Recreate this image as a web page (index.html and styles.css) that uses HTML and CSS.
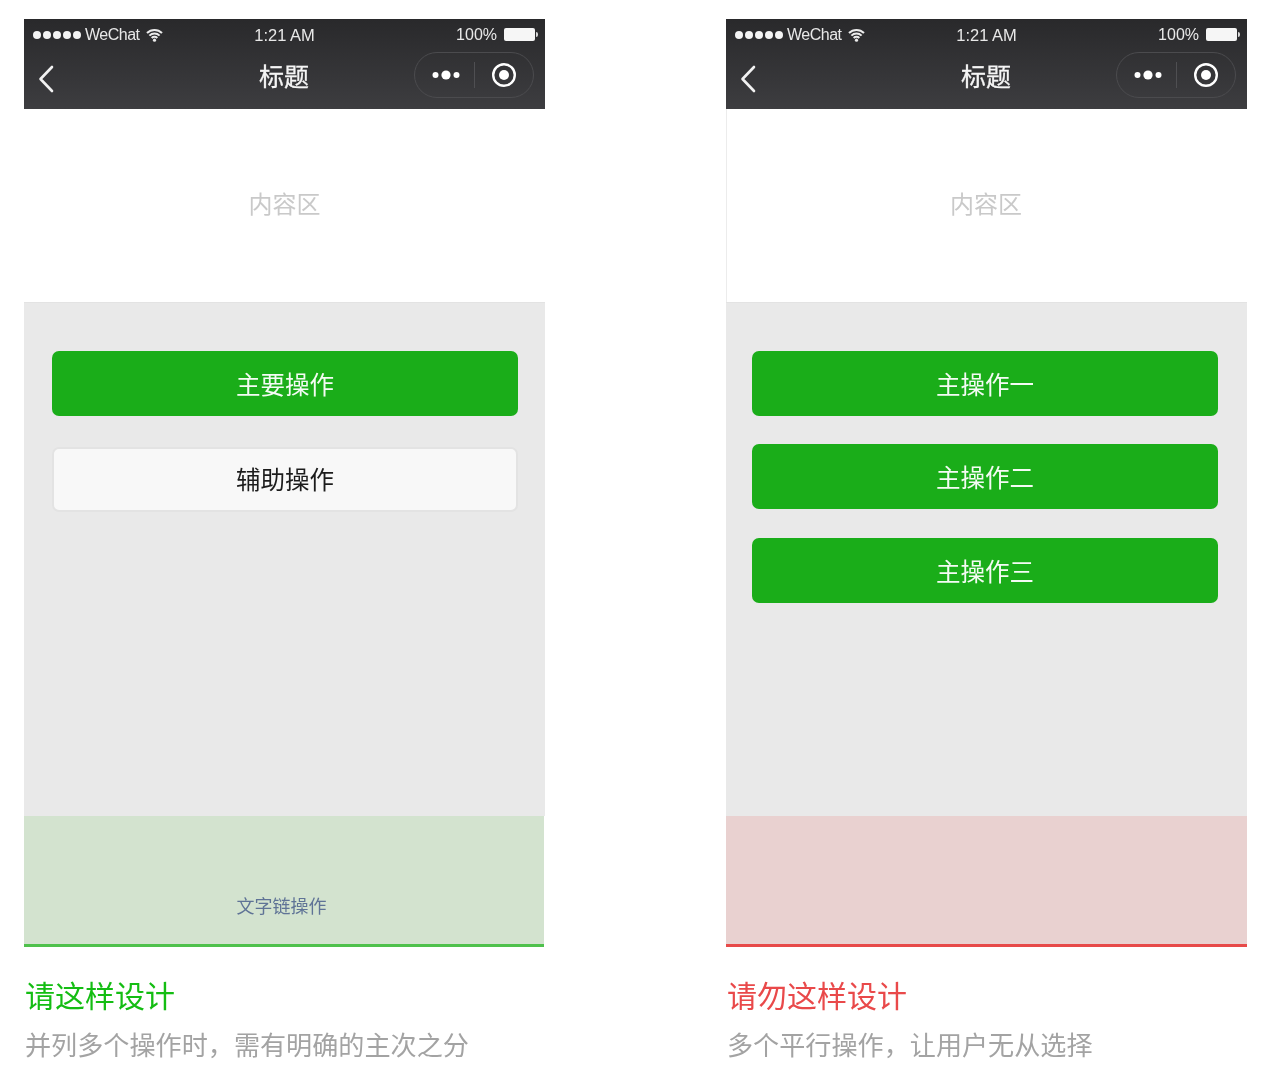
FILE: index.html
```html
<!DOCTYPE html>
<html lang="zh-CN">
<head>
    <meta charset="UTF-8">
    <meta name="viewport" content="width=device-width, initial-scale=1.0">
    <title>主次操作</title>
    <link rel="stylesheet" href="styles.css">
</head>
<body>
    <main class="compare">
        <!-- do -->
        <section class="sample sample-do">
            <header class="phone-head">
                <div class="status-bar">
                    <div class="status-left">
                        <span class="signal"><i></i><i></i><i></i><i></i><i></i></span>
                        <span class="carrier">WeChat</span>
                        <svg class="wifi" width="17" height="14" viewBox="0 0 17 14"><path d="M1 5a10.6 10.6 0 0 1 15 0M3.4 7.6a7.2 7.2 0 0 1 10.2 0M5.7 10a3.9 3.9 0 0 1 5.6 0" fill="none" stroke="#ececec" stroke-width="2"/><circle cx="8.5" cy="12.2" r="1.6" fill="#ececec"/></svg>
                    </div>
                    <div class="status-time">1:21 AM</div>
                    <div class="status-right">
                        <span class="percent">100%</span>
                        <span class="battery"></span>
                    </div>
                </div>
                <div class="nav-bar">
                    <svg class="back" width="16" height="28" viewBox="0 0 16 28"><path d="M14 2 2.5 14 14 26" fill="none" stroke="#f2f2f2" stroke-width="2.6" stroke-linecap="round" stroke-linejoin="round"/></svg>
                    <div class="nav-title">标题</div>
                    <div class="capsule">
                        <svg class="more" width="28" height="10" viewBox="0 0 28 10"><circle cx="3.5" cy="5" r="3" fill="#fff"/><circle cx="14" cy="5" r="4.6" fill="#fff"/><circle cx="24.5" cy="5" r="3" fill="#fff"/></svg>
                        <span class="capsule-line"></span>
                        <svg class="target" width="26" height="26" viewBox="0 0 26 26"><circle cx="13" cy="13" r="10.8" fill="none" stroke="#fff" stroke-width="2.4"/><circle cx="13" cy="13" r="5" fill="#fff"/></svg>
                    </div>
                </div>
            </header>
            <div class="content-area">内容区</div>
            <div class="actions actions-do">
                <div class="btn btn-primary">主要操作</div>
                <div class="btn btn-default">辅助操作</div>
            </div>
            <div class="foot-zone foot-good"><a class="text-link">文字链操作</a></div>
            <h2 class="verdict verdict-good">请这样设计</h2>
            <p class="note">并列多个操作时，需有明确的主次之分</p>
        </section>

        <!-- don't -->
        <section class="sample sample-dont">
            <header class="phone-head">
                <div class="status-bar">
                    <div class="status-left">
                        <span class="signal"><i></i><i></i><i></i><i></i><i></i></span>
                        <span class="carrier">WeChat</span>
                        <svg class="wifi" width="17" height="14" viewBox="0 0 17 14"><path d="M1 5a10.6 10.6 0 0 1 15 0M3.4 7.6a7.2 7.2 0 0 1 10.2 0M5.7 10a3.9 3.9 0 0 1 5.6 0" fill="none" stroke="#ececec" stroke-width="2"/><circle cx="8.5" cy="12.2" r="1.6" fill="#ececec"/></svg>
                    </div>
                    <div class="status-time">1:21 AM</div>
                    <div class="status-right">
                        <span class="percent">100%</span>
                        <span class="battery"></span>
                    </div>
                </div>
                <div class="nav-bar">
                    <svg class="back" width="16" height="28" viewBox="0 0 16 28"><path d="M14 2 2.5 14 14 26" fill="none" stroke="#f2f2f2" stroke-width="2.6" stroke-linecap="round" stroke-linejoin="round"/></svg>
                    <div class="nav-title">标题</div>
                    <div class="capsule">
                        <svg class="more" width="28" height="10" viewBox="0 0 28 10"><circle cx="3.5" cy="5" r="3" fill="#fff"/><circle cx="14" cy="5" r="4.6" fill="#fff"/><circle cx="24.5" cy="5" r="3" fill="#fff"/></svg>
                        <span class="capsule-line"></span>
                        <svg class="target" width="26" height="26" viewBox="0 0 26 26"><circle cx="13" cy="13" r="10.8" fill="none" stroke="#fff" stroke-width="2.4"/><circle cx="13" cy="13" r="5" fill="#fff"/></svg>
                    </div>
                </div>
            </header>
            <div class="content-area">内容区</div>
            <div class="actions actions-dont">
                <div class="btn btn-primary">主操作一</div>
                <div class="btn btn-primary">主操作二</div>
                <div class="btn btn-primary">主操作三</div>
            </div>
            <div class="foot-zone foot-bad"></div>
            <h2 class="verdict verdict-bad">请勿这样设计</h2>
            <p class="note">多个平行操作，让用户无从选择</p>
        </section>
    </main>
</body>
</html>
```

FILE: styles.css
```css
* {
    margin: 0;
    padding: 0;
    box-sizing: border-box;
}

body {
    font-family: "Noto Sans CJK SC", "Liberation Sans", sans-serif;
    background: #ffffff;
}

.compare {
    display: flex;
    gap: 181px;
    padding: 19px 0 0 24px;
}

.sample {
    width: 521px;
}

/* phone header */
.phone-head {
    height: 90px;
    background: linear-gradient(180deg, #29292b 0%, #3d3d40 100%);
    color: #e8e8e8;
    filter: blur(0.4px);
}

.status-bar {
    height: 31px;
    display: grid;
    grid-template-columns: 1fr auto 1fr;
    align-items: center;
    padding: 0 7px 0 9px;
    font-family: "Liberation Sans", sans-serif;
    font-size: 16px;
}

.status-left {
    display: flex;
    align-items: center;
}

.signal {
    display: flex;
    gap: 2px;
    margin-right: 4px;
}

.signal i {
    width: 8px;
    height: 8px;
    border-radius: 50%;
    background: #f4f4f4;
}

.carrier {
    letter-spacing: -0.5px;
    margin-right: 6px;
}

.status-time {
    font-size: 16.5px;
    padding-top: 2px;
    margin-left: -2px;
}

.status-right {
    display: flex;
    align-items: center;
    justify-content: flex-end;
}

.percent {
    margin-right: 7px;
}

.battery {
    width: 31px;
    height: 13px;
    margin-right: 3px;
    background: #f6f6f6;
    border-radius: 2px;
    position: relative;
}

.battery::after {
    content: '';
    position: absolute;
    right: -3px;
    top: 4px;
    width: 2px;
    height: 5px;
    background: #d8d8d8;
    border-radius: 0 2px 2px 0;
}

.nav-bar {
    height: 59px;
    display: grid;
    grid-template-columns: 1fr auto 1fr;
    align-items: center;
    padding: 0 11px 0 14px;
}

.back {
    margin-top: -2px;
}

.nav-title {
    font-size: 25px;
    font-weight: 400;
    color: #f5f5f5;
    line-height: 1;
    margin: -9px 4px 0 0;
    -webkit-text-stroke: 0.3px #f5f5f5;
}

.capsule {
    justify-self: end;
    width: 120px;
    height: 46px;
    margin-top: -9px;
    display: flex;
    align-items: center;
    border: 1px solid #4b4b4e;
    border-radius: 23px;
    padding-left: 17px;
}

.capsule-line {
    width: 1px;
    height: 26px;
    background: #4f4f52;
    margin: 0 16px 0 14px;
}

/* page blocks */
.content-area {
    height: 193px;
    padding-bottom: 6px;
    display: flex;
    align-items: center;
    justify-content: center;
    font-size: 24px;
    color: #c9c9c9;
    filter: blur(0.3px);
}

.sample-dont .content-area {
    box-shadow: inset 1px 0 0 #ececec;
    padding-right: 1px;
}

.actions {
    height: 514px;
    background: #e9e9e9;
    border-top: 1px solid #e3e3e3;
    padding: 48px 27px 0 28px;
    display: flex;
    flex-direction: column;
}

.actions-do {
    gap: 31px;
}

.actions-dont {
    gap: 28px;
    padding: 48px 29px 0 26px;
}

.actions-dont .btn:last-child {
    margin-top: 1px;
}

.btn {
    height: 65px;
    display: flex;
    align-items: center;
    justify-content: center;
    border-radius: 7px;
    font-size: 24.5px;
    filter: blur(0.3px);
}

.btn-primary {
    background: #1aad19;
    color: #f4fbf4;
}

.btn-default {
    background: #f8f8f8;
    border: 2px solid #e3e3e3;
    color: #1c1c1c;
    padding-bottom: 2px;
}

.foot-zone {
    height: 131px;
    border-bottom: 3px solid;
    display: flex;
    align-items: flex-end;
    justify-content: center;
}

.foot-good {
    background: #d3e3cf;
    border-color: #4fc14c;
    margin-right: 1px;
    padding: 0 5px 26px 0;
}

.foot-bad {
    background: #e9d1d0;
    border-color: #e74a49;
}

.text-link {
    font-size: 18px;
    color: #5f7396;
    filter: blur(0.3px);
}

.verdict {
    font-size: 30px;
    font-weight: 400;
    line-height: 40px;
    margin: 27px 0 0 1px;
    filter: blur(0.3px);
}

.verdict-good {
    color: #14bd13;
}

.verdict-bad {
    color: #e9494a;
}

.note {
    font-size: 26.12px;
    line-height: 38px;
    margin: 11px 0 0 1px;
    color: #a3a3a3;
    filter: blur(0.3px);
}
```
